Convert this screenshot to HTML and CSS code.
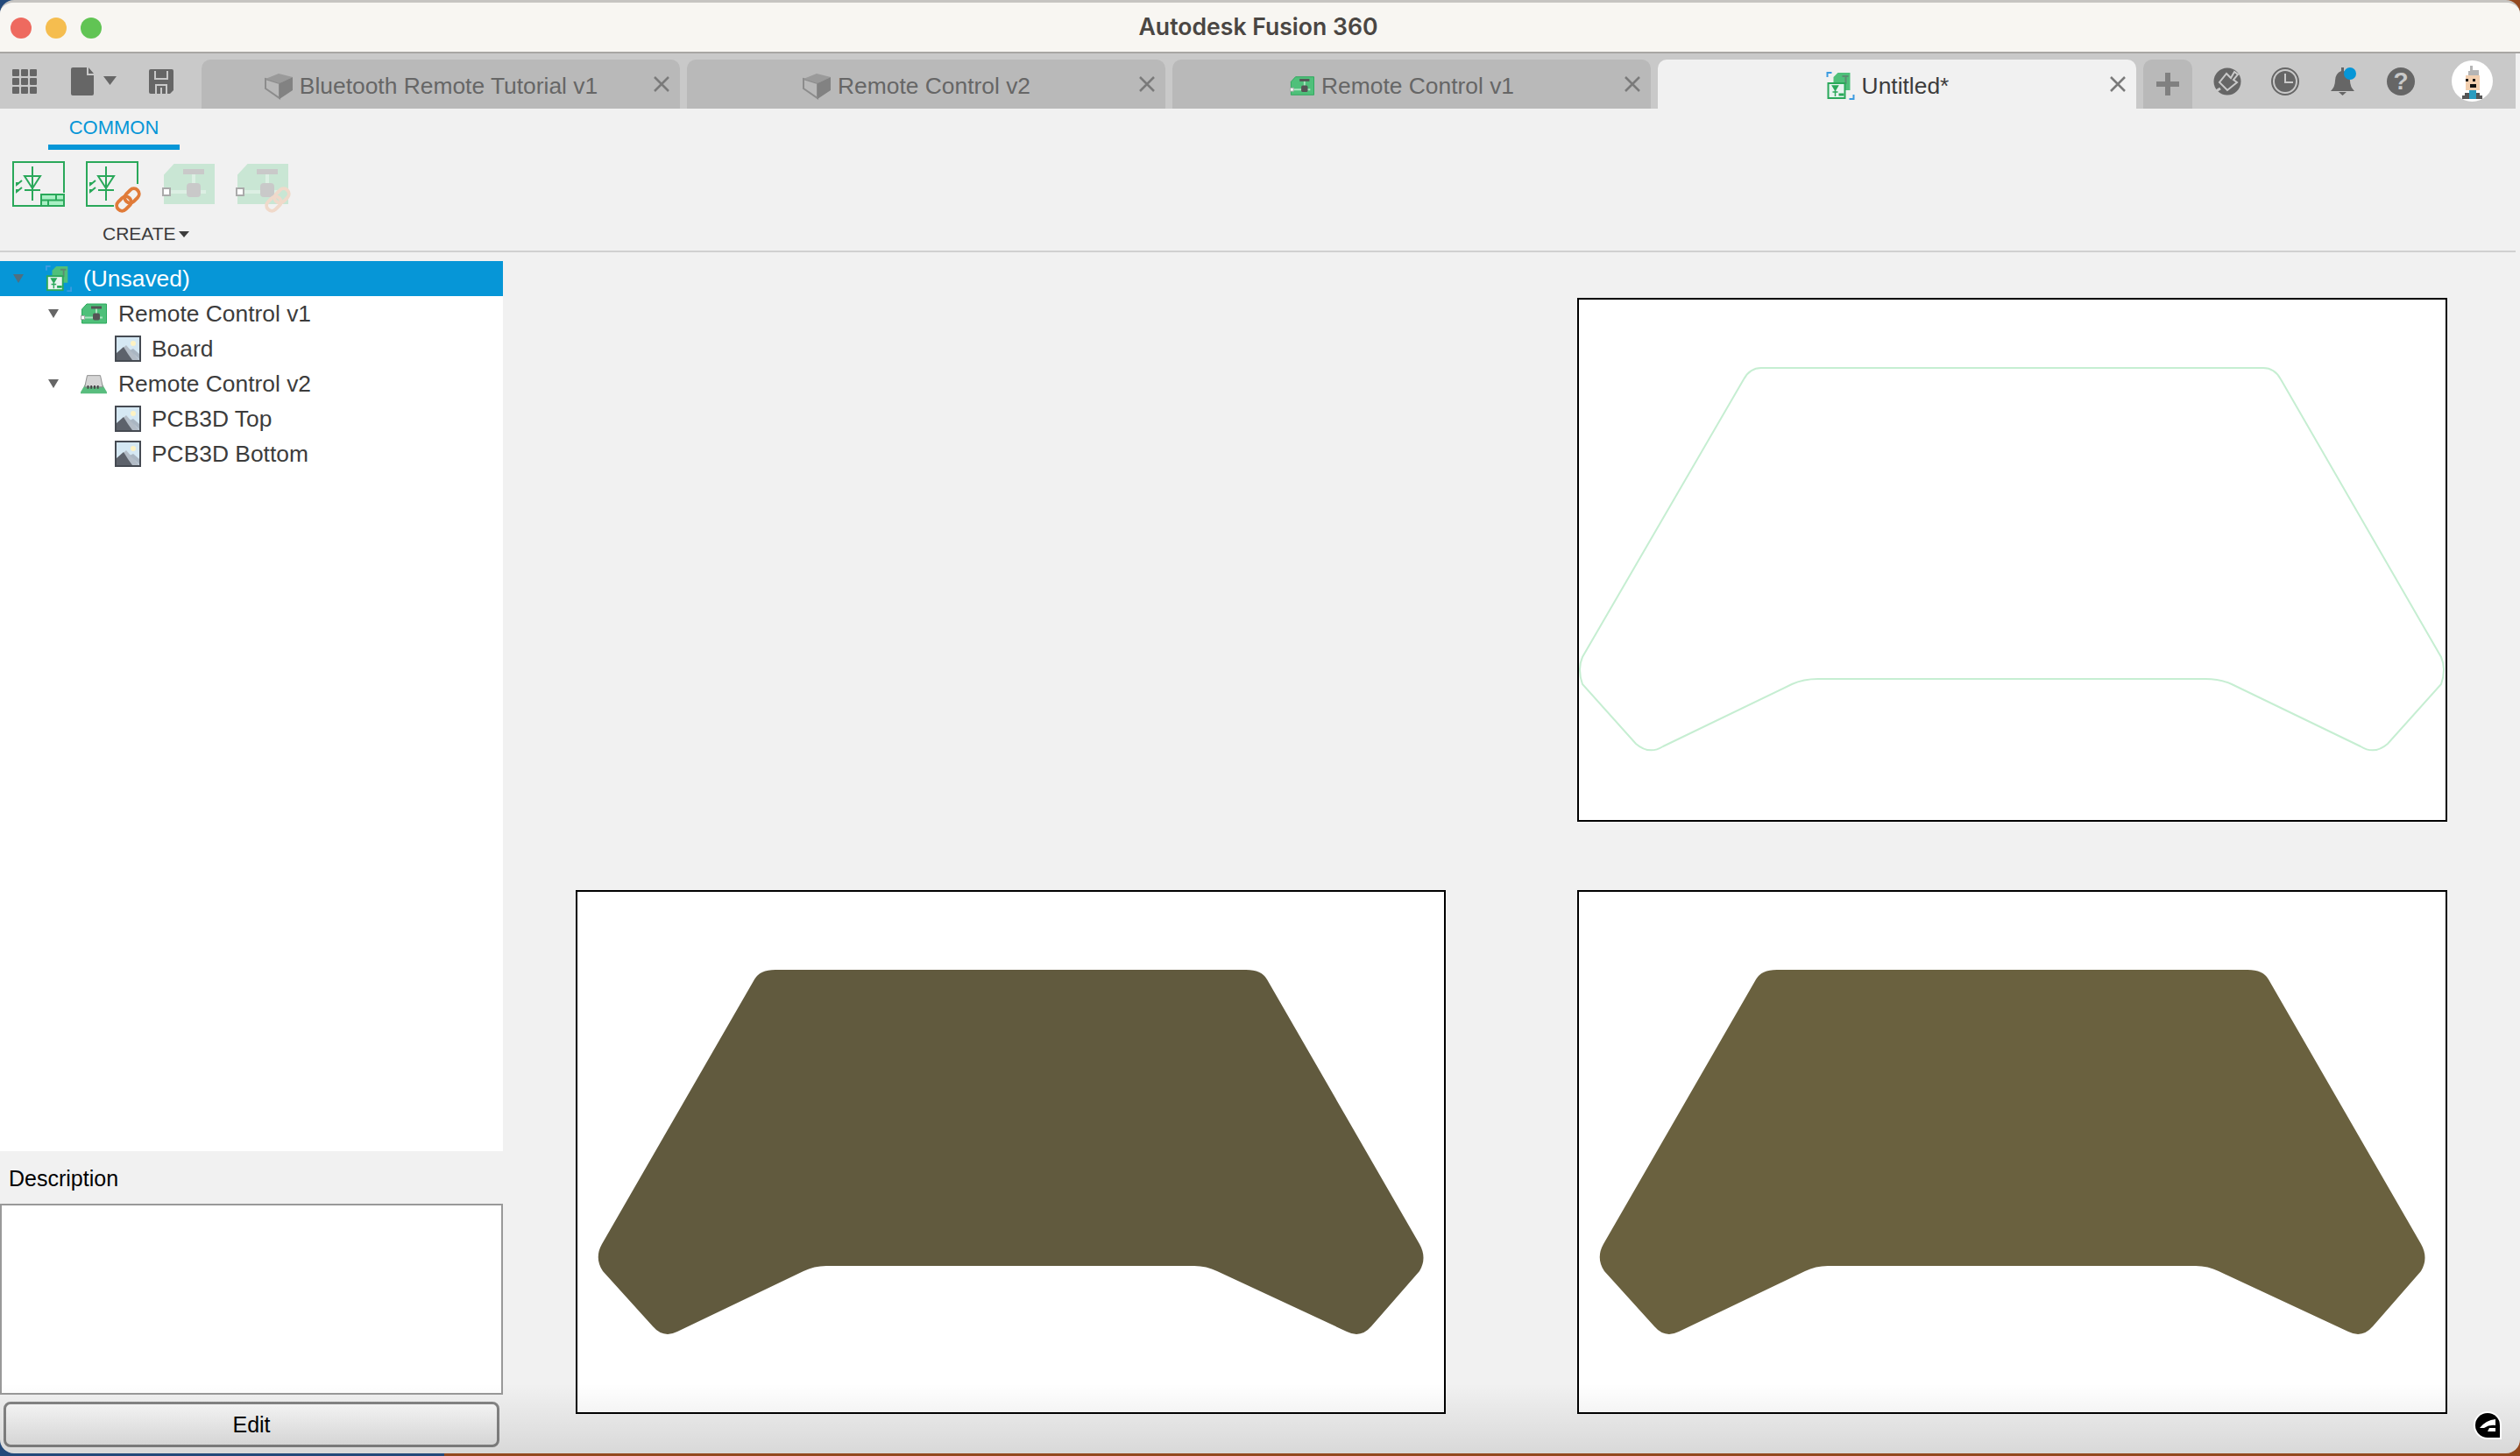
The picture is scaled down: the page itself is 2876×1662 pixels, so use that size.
FILE: index.html
```html
<!DOCTYPE html>
<html lang="en">
<head>
  <meta charset="UTF-8">
  <title>Autodesk Fusion 360</title>
  <link rel="stylesheet" href="styles.css">
</head>
<body>

<svg class="defs" width="0" height="0">
  <defs>
    <symbol id="pcb" viewBox="0 0 60 46">
      <path class="pcb-board" d="M14 1H59V45H3V13Z"/>
      <path class="pcb-trace" d="M36 8V24M8 32H50" />
      <rect class="pcb-part" x="24" y="6" width="24" height="6"/>
      <rect class="pcb-part" x="28" y="22" width="16" height="16" rx="4"/>
      <rect x="1" y="28" width="8" height="8" fill="#fff" stroke="#aaa" stroke-width="2"/>
    </symbol>
    <symbol id="link" viewBox="-4 -6 44 44">
      <g fill="none" stroke-width="4.500" transform="rotate(-45 18 16)">
        <rect x="0" y="9" width="21" height="14" rx="7"/>
        <rect x="15" y="9" width="21" height="14" rx="7"/>
      </g>
    </symbol>
    <symbol id="sketch" viewBox="0 0 60 52">
      <g fill="none" stroke="#2aa85a" stroke-width="2">
        <path d="M23 6V45M14 33H32M14 17H32L23 31Z"/>
        <path d="M11 22L5 27M11 30L5 35"/>
      </g>
      <path d="M4 24L9 24L4 29ZM4 32L9 32L4 37Z" fill="#2aa85a"/>
    </symbol>
    <symbol id="design" viewBox="0 0 32 32">
      <path d="M1 6V1H6M26 31H31V26" fill="none" stroke="#3b9be0" stroke-width="2"/>
      <path d="M13 1H27V21H8V6Z" fill="#4fc07a"/>
      <path d="M18 5H25M22 5V14" fill="none" stroke="#5c8c72" stroke-width="2"/>
      <rect x="2" y="13" width="19" height="17" fill="#e8f4f0" stroke="#2aa85a" stroke-width="2"/>
      <path d="M7 16H13L10 21ZM7 23H13M10 21V28" fill="#2aa85a" stroke="#2aa85a" stroke-width="1.5"/>
      <path d="M14 26H20" stroke="#2aa85a" stroke-width="3"/>
    </symbol>
    <symbol id="picture" viewBox="0 0 30 30">
      <rect x="1" y="1" width="28" height="28" fill="#d5e8f3" stroke="#454a52" stroke-width="2"/>
      <circle cx="21" cy="9" r="3" fill="#fdf3c4"/>
      <path d="M2 21L13 11L28 28V28H2Z" fill="#b3bcc6"/>
      <path d="M2 20L10 13L15 21L20 28H2Z" fill="#5d626b"/>
      <path d="M17 17L21 15L28 21V27Z" fill="#aab6c2"/>
    </symbol>
    <symbol id="cube" viewBox="0 0 32 32">
      <path d="M1 8L17 13V30L1 19Z" fill="#b9b9b9" stroke="#8c8c8c" stroke-width="2"/>
      <path d="M1 8L16 2L32 6L17 13Z" fill="#9a9a9a"/>
      <path d="M17 13L32 6V21L17 31Z" fill="#828282"/>
    </symbol>
    <symbol id="close" viewBox="0 0 18 18">
      <path d="M1 1L17 17M17 1L1 17" fill="none" stroke="#7a7a7a" stroke-width="2.500"/>
    </symbol>
  </defs>
</svg>

<div class="window">
  <header class="titlebar">
    <div class="traffic">
      <span class="light red"></span>
      <span class="light yellow"></span>
      <span class="light green"></span>
    </div>
    <h1 class="app-title">Autodesk Fusion 360</h1>
  </header>

  <nav class="tabbar">
    <div class="tools">
      <svg class="tool-grid" width="28" height="28" viewBox="0 0 28 28" fill="#666">
        <rect width="8" height="8" rx="1"/><rect x="10" width="8" height="8" rx="1"/><rect x="20" width="8" height="8" rx="1"/>
        <rect y="10" width="8" height="8" rx="1"/><rect x="10" y="10" width="8" height="8" rx="1"/><rect x="20" y="10" width="8" height="8" rx="1"/>
        <rect y="20" width="8" height="8" rx="1"/><rect x="10" y="20" width="8" height="8" rx="1"/><rect x="20" y="20" width="8" height="8" rx="1"/>
      </svg>
      <svg class="tool-file" width="52" height="32" viewBox="0 0 52 32" fill="#666">
        <path d="M2 0H18V9H26V30Q26 32 24 32H2Q0 32 0 30V2Q0 0 2 0ZM20 0L26 7H20Z"/>
        <path d="M37 10H52L44.500 20Z"/>
      </svg>
      <svg class="tool-save" width="28" height="28" viewBox="0 0 28 28">
        <path d="M2 0H26Q28 0 28 2V24L24 28H2Q0 28 0 26V2Q0 0 2 0Z" fill="#666"/>
        <path d="M7 2V11H21V2" fill="none" stroke="#c9c9c9" stroke-width="2"/>
        <path d="M8 28V18H20V28M14 21V28" fill="none" stroke="#c9c9c9" stroke-width="2"/>
      </svg>
    </div>

    <div class="tabs">
      <div class="tab">
        <span class="tab-label"><svg class="tab-cube"><use href="#cube"/></svg>Bluetooth Remote Tutorial v1</span>
        <svg class="tab-close"><use href="#close"/></svg>
      </div>
      <div class="tab">
        <span class="tab-label"><svg class="tab-cube"><use href="#cube"/></svg>Remote Control v2</span>
        <svg class="tab-close"><use href="#close"/></svg>
      </div>
      <div class="tab">
        <span class="tab-label"><svg class="tab-pcb pcb-on"><use href="#pcb"/></svg>Remote Control v1</span>
        <svg class="tab-close"><use href="#close"/></svg>
      </div>
      <div class="tab active">
        <span class="tab-label"><svg class="tab-design"><use href="#design"/></svg>Untitled*</span>
        <svg class="tab-close"><use href="#close"/></svg>
      </div>
    </div>

    <div class="tab-add">
      <svg width="26" height="26" viewBox="0 0 26 26" fill="#808080"><path d="M10 0H16V10H26V16H16V26H10V16H0V10H10Z"/></svg>
    </div>

    <div class="status-icons">
      <svg width="32" height="32" viewBox="0 0 32 32">
        <circle cx="16" cy="16" r="15.500" fill="#666"/>
        <path d="M15 7L20 12L24 5L28 8L23 14L27 17L16 26L7 17Z" fill="#666" stroke="#c9c9c9" stroke-width="2"/>
        <path d="M8 24L3 27" stroke="#c9c9c9" stroke-width="3"/>
      </svg>
      <svg width="32" height="32" viewBox="0 0 32 32">
        <circle cx="16" cy="16" r="15" fill="none" stroke="#666" stroke-width="2"/>
        <circle cx="16" cy="16" r="12" fill="#666"/>
        <path d="M16 7V17H25" fill="none" stroke="#c9c9c9" stroke-width="2"/>
      </svg>
      <svg width="32" height="32" viewBox="0 0 32 32">
        <path d="M14 0H17V4Q24 7 24 15Q24 22 29 27H2Q7 22 7 15Q7 7 14 4Z" fill="#666"/>
        <path d="M11 28H20L15.500 32Z" fill="#666"/>
        <circle cx="24" cy="7" r="7" fill="#0696d7"/>
      </svg>
      <span class="help-icon">?</span>
    </div>

    <svg class="avatar" width="47" height="47" viewBox="0 0 47 47">
      <circle cx="23.500" cy="23.500" r="23.500" fill="#fff"/>
      <path d="M21 6H24V11H31V20H19V12H21Z" fill="#b5b5b5"/>
      <rect x="16" y="17" width="16" height="17" fill="#f2cfaf"/>
      <rect x="16" y="21" width="3" height="3" fill="#111"/>
      <rect x="21" y="27" width="7" height="4" fill="#111"/>
      <rect x="24" y="21" width="3" height="3" fill="#111"/>
      <path d="M12 40H35V44H12ZM15 37H32V40H15Z" fill="#555"/>
      <path d="M20 34H28V44H20Z" fill="#2a9cc0"/>
    </svg>
  </nav>

  <section class="ribbon">
    <div class="ribbon-tab"><span>COMMON</span></div>
    <div class="ribbon-tools">
      <svg class="ribbon-icon" viewBox="0 0 70 60">
        <path d="M32 51H1V1H59V36" fill="none" stroke="#2aa85a" stroke-width="2"/>
        <use href="#sketch" width="60" height="52"/>
        <rect x="33" y="38" width="26" height="13" fill="#a9f0c4" stroke="#2aa85a" stroke-width="2"/>
        <path d="M33 44.500H59M41 44.500V51M50 38V44.500" stroke="#2aa85a" stroke-width="2"/>
      </svg>
      <svg class="ribbon-icon" viewBox="0 0 70 60">
        <path d="M32 51H1V1H59V26" fill="none" stroke="#2aa85a" stroke-width="2"/>
        <use href="#sketch" width="60" height="52"/>
        <use href="#link" class="link-on" x="29" y="25" width="38" height="38"/>
      </svg>
      <svg class="ribbon-icon pcb-off" viewBox="0 0 70 60">
        <use href="#pcb" x="3" y="3" width="60" height="46"/>
      </svg>
      <svg class="ribbon-icon pcb-off" viewBox="0 0 70 60">
        <use href="#pcb" x="3" y="3" width="60" height="46"/>
        <use href="#link" class="link-off" x="32" y="25" width="38" height="38"/>
      </svg>
    </div>
    <div class="ribbon-group">CREATE<span class="caret"></span></div>
  </section>

  <main class="content">
    <aside class="sidebar">
      <ul class="tree">
        <li class="tree-row selected level-0">
          <span class="arrow"></span>
          <svg class="tree-icon"><use href="#design"/></svg>
          (Unsaved)
        </li>
        <li class="tree-row level-1">
          <span class="arrow"></span>
          <svg class="tree-icon pcb-on"><use href="#pcb"/></svg>
          Remote Control v1
        </li>
        <li class="tree-row level-2">
          <svg class="tree-icon"><use href="#picture"/></svg>
          Board
        </li>
        <li class="tree-row level-1">
          <span class="arrow"></span>
          <svg class="tree-icon" viewBox="0 0 32 24">
            <path d="M0 22L6 12H26L32 22V24H0Z" fill="#59bd7e"/>
            <path d="M8 2H24L27 16H5Z" fill="#d5d5d5" stroke="#8a8a8a"/>
            <path d="M8 16H24" stroke="#444" stroke-width="4" stroke-dasharray="2 2"/>
          </svg>
          Remote Control v2
        </li>
        <li class="tree-row level-2">
          <svg class="tree-icon"><use href="#picture"/></svg>
          PCB3D Top
        </li>
        <li class="tree-row level-2">
          <svg class="tree-icon"><use href="#picture"/></svg>
          PCB3D Bottom
        </li>
      </ul>
      <div class="desc-label">Description</div>
      <div class="desc-box"></div>
      <button class="edit-btn" type="button">Edit</button>
    </aside>

    <div class="canvas">
      <div class="frame frame-top">
        <svg viewBox="2 2 989 594">
          <path class="outline" d="M210 80H783Q796 80 803 93L986 410Q992 424 986 441L925 509Q910 522 894 512L747 441Q734 435 717 435H275Q258 435 245 441L98 512Q82 522 67 509L6 441Q0 424 6 410L190 93Q197 80 210 80Z"/>
        </svg>
      </div>
      <div class="frame">
        <svg viewBox="2 2 989 594">
          <path class="solid" d="M228 91H765Q783 91 789 102L963 404Q972 420 963 435L908 498Q896 512 880 504L732 435Q720 429 706 429H286Q272 429 260 435L116 504Q100 512 88 498L31 435Q21 420 30 404L204 102Q210 91 228 91Z"/>
        </svg>
      </div>
      <div class="frame">
        <svg viewBox="2 2 989 594">
          <path class="solid light-solid" d="M228 91H765Q783 91 789 102L963 404Q972 420 963 435L908 498Q896 512 880 504L732 435Q720 429 706 429H286Q272 429 260 435L116 504Q100 512 88 498L31 435Q21 420 30 404L204 102Q210 91 228 91Z"/>
        </svg>
      </div>
    </div>
  </main>

  <div class="dock-shade"></div>
  <svg class="corner-logo" width="32" height="32" viewBox="0 0 32 32">
    <path d="M16 0A16 16 0 0 0 16 32H32V16A16 16 0 0 0 16 0Z" fill="#fff"/>
    <path d="M16 2A14 14 0 0 0 16 30H30V16A14 14 0 0 0 16 2Z" fill="#000"/>
    <path d="M7 19Q14 10 25 9V16Q18 15 12 19ZM18 19H25V23H16Z" fill="#fff"/>
  </svg>
</div>

</body>
</html>
```

FILE: styles.css
```css
* { box-sizing: border-box; }

html, body { margin: 0; height: 100%; }

body {
  height: 1662px;
  overflow: hidden;
  font-family: "Liberation Sans", Arial, sans-serif;
  font-size: 26.4px;
  color: #3c3c3c;
  background: linear-gradient(90deg, #23497a 0, #23497a 507px, #93491f 507px, #93491f 100%);
}

.defs { position: absolute; }

.window {
  position: relative;
  width: 2876px;
  height: 1659px;
  display: flex;
  flex-direction: column;
  overflow: hidden;
  background: #f1f1f1;
  border-top: 3px solid #c6c4c1;
  border-radius: 16px;
}

/* title bar */
.titlebar {
  height: 58px;
  flex: none;
  display: flex;
  align-items: center;
  justify-content: center;
  position: relative;
  background: #f8f6f2;
  border-bottom: 2px solid #a8a6a3;
}

.traffic {
  position: absolute;
  left: 12px;
  top: 17px;
  display: flex;
  gap: 16px;
}

.light { width: 24px; height: 24px; border-radius: 50%; }
.red { background: #ee6a5f; }
.yellow { background: #f5bd4f; }
.green { background: #61c454; }

.app-title {
  margin: 0 4px 2px 0;
  font-family: Inter, "Liberation Sans", sans-serif;
  font-size: 26.6px;
  font-weight: 600;
  color: #4a4643;
}

/* tab bar */
.tabbar {
  height: 63px;
  flex: none;
  margin-right: 5px;
  display: flex;
  align-items: flex-end;
  background: #c9c9c9;
}

.tools {
  width: 230px;
  height: 63px;
  flex: none;
  display: flex;
  align-items: center;
  padding-left: 14px;
}

.tool-file { margin-left: 39px; }
.tool-save { margin-left: 37px; }

.tabs { display: flex; gap: 8px; }

.tab {
  width: 546px;
  height: 56px;
  display: flex;
  align-items: center;
  padding-left: 8px;
  background: #b9b9b9;
  color: #666;
  border-radius: 10px 10px 0 0;
}

.tab.active { background: #f1f1f1; color: #3c3c3c; }

.tab-label {
  flex: 1;
  display: flex;
  align-items: center;
  justify-content: center;
  gap: 8px;
  padding-top: 4px;
  white-space: nowrap;
}

.tab-cube { width: 32px; height: 32px; }
.tab-pcb { width: 28px; height: 22px; }
.tab-design { width: 33px; height: 32px; }

.tab-close {
  width: 18px;
  height: 18px;
  margin-right: 12px;
  flex: none;
}

.tab-add {
  width: 56px;
  height: 56px;
  margin-left: 8px;
  display: flex;
  align-items: center;
  justify-content: center;
  background: #b9b9b9;
  border-radius: 10px 10px 0 0;
}

.status-icons {
  height: 63px;
  margin-left: 24px;
  display: flex;
  align-items: center;
  gap: 34px;
}

.help-icon {
  width: 32px;
  height: 32px;
  border-radius: 50%;
  background: #666;
  color: #c9c9c9;
  font-size: 28px;
  font-weight: bold;
  line-height: 32px;
  text-align: center;
}

.avatar { margin: 0 0 8px 42px; }

/* ribbon */
.ribbon {
  height: 164px;
  flex: none;
  margin-right: 5px;
  border-bottom: 2px solid #d0d0d0;
}

.ribbon-tab {
  width: 150px;
  height: 47px;
  margin-left: 55px;
  padding-top: 9px;
  border-bottom: 6px solid #0696d7;
  color: #0696d7;
  font-size: 22px;
  text-align: center;
}

.ribbon-tools {
  display: flex;
  gap: 14px;
  margin: 13px 0 0 14px;
}

.ribbon-icon { width: 70px; height: 60px; overflow: visible; }

.ribbon-group {
  display: flex;
  align-items: center;
  padding: 11px 0 0 117px;
  font-size: 21px;
  line-height: 24px;
}

.caret {
  margin-left: 3px;
  border-style: solid;
  border-width: 7px 6px 0;
  border-color: #3c3c3c transparent transparent;
}

/* pcb symbol colours */
.pcb-board { fill: var(--board); stroke: var(--edge); stroke-width: 2; }
.pcb-trace { fill: none; stroke: var(--trace); stroke-width: 4; }
.pcb-part { fill: var(--part); }

.pcb-on { --board: #4fc07a; --edge: #2aa85a; --trace: #a9e5bf; --part: #555; }
.pcb-off { --board: #c9e6d4; --edge: #c9e6d4; --trace: #dcefe3; --part: #c9c9c9; }

.link-on { stroke: #e07b39; }
.link-off { stroke: #f0d9ca; }

/* sidebar */
.content { flex: 1; display: flex; min-height: 0; }

.sidebar {
  width: 574px;
  flex: none;
  display: flex;
  flex-direction: column;
  padding-top: 10px;
}

.tree {
  flex: 1;
  margin: 0;
  padding: 0;
  list-style: none;
  background: #fff;
}

.tree-row {
  height: 40px;
  display: flex;
  align-items: center;
  white-space: nowrap;
}

.level-0 { padding-left: 15px; }
.level-1 { padding-left: 55px; }
.level-2 { padding-left: 131px; }

.selected { background: #0696d7; color: #fff; }

.arrow {
  width: 0;
  margin-right: 25px;
  border-style: solid;
  border-width: 10px 6px 0;
  border-color: #666 transparent transparent;
}

.selected .arrow { border-top-color: #4f6f80; }

.tree-icon { width: 30px; height: 30px; margin-right: 13px; flex: none; }
.level-1 .tree-icon { height: 24px; }
.level-2 .tree-icon { margin-right: 12px; }
.selected .tree-icon { height: 30px; }

.desc-label {
  height: 60px;
  flex: none;
  padding: 17px 0 0 10px;
  font-size: 25px;
  color: #000;
}

.desc-box {
  height: 218px;
  flex: none;
  background: #fff;
  border: 2px solid #999;
}

.edit-btn {
  width: 566px;
  height: 52px;
  flex: none;
  margin: 8px 0 7px 4px;
  background: linear-gradient(#fafafa, #eaeaea);
  border: 3px solid #858585;
  border-radius: 8px;
  font: 25px "Liberation Sans", Arial, sans-serif;
  color: #000;
}

/* canvas */
.canvas {
  flex: 1;
  display: grid;
  grid-template-columns: 993px 993px;
  grid-auto-rows: 598px;
  column-gap: 150px;
  row-gap: 78px;
  padding: 52px 0 0 83px;
}

.frame {
  background: #fff;
  border: 2px solid #000;
}

.frame svg { display: block; width: 100%; height: 100%; overflow: visible; }

.frame-top { grid-column: 2; }

.outline { fill: none; stroke: #c6eed2; stroke-width: 2; }
.solid { fill: #615a3e; }
.light-solid { fill: #6a613f; }

/* overlays */
.dock-shade {
  position: absolute;
  left: 0;
  right: 0;
  bottom: 0;
  height: 80px;
  background: linear-gradient(rgba(0, 0, 0, 0), rgba(0, 0, 0, 0.1));
  pointer-events: none;
}

.corner-logo { position: absolute; left: 2823px; top: 1608px; }
```
